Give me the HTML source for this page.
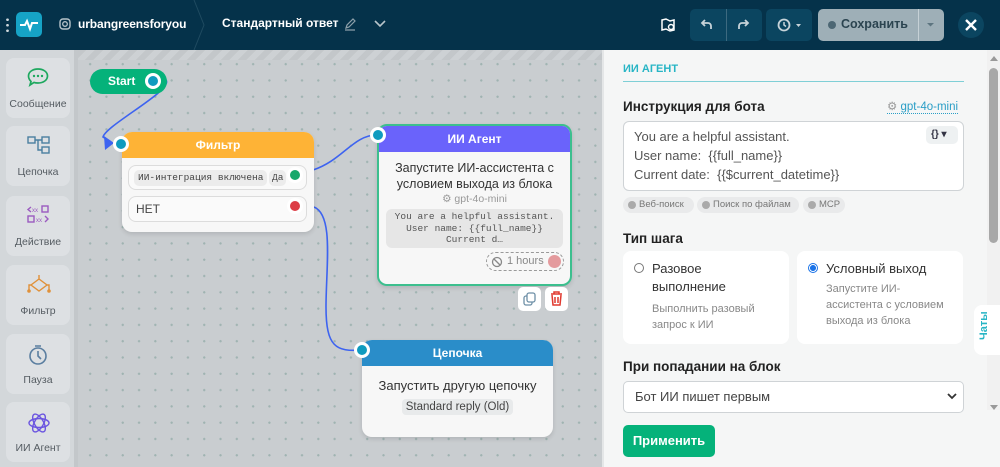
<!DOCTYPE html>
<html><head><meta charset="utf-8"><style>
*{box-sizing:border-box;margin:0;padding:0}
body{width:1000px;height:467px;overflow:hidden;font-family:"Liberation Sans","Noto Sans CJK SC",sans-serif;background:#c9cdd0;position:relative}
.abs{position:absolute}
.hdr{left:0;top:0;width:1000px;height:50px;background:#05324a;color:#fff}
.canvas{left:78px;top:50px;width:524px;height:417px;background-color:#c9cdd0;background-image:radial-gradient(circle,#9fb3b1 1px,transparent 1.3px);background-size:16.3px 16.3px;background-position:4px 6px}
.side{left:0;top:50px;width:78px;height:417px;background:#d3d7da;border-right:4px solid #c3c7ca}
.item{left:6px;width:64px;height:60px;background:#dde0e3;border-radius:8px;font-size:10.5px;color:#555c62;text-align:center}
.item span{position:absolute;left:0;right:0;bottom:8px}
.item svg{position:absolute;left:20px;top:8px}
.node{background:#f7f7f7;border-radius:10px;box-shadow:0 2px 5px rgba(0,0,0,.12);overflow:hidden}
.nh{height:26px;color:#fff;font-weight:bold;font-size:12px;text-align:center;line-height:26px}
.port{width:16px;height:16px;border-radius:50%;background:#0f9bbf;border:3px solid #fff}
.panel{left:602px;top:50px;width:398px;height:417px;background:#f5f6f6}
.lbl{font-size:13.5px;color:#222;font-weight:bold}
.chip{height:16px;border-radius:8px;background:#e9eaeb;font-size:9.5px;color:#777;padding:0 6px 0 16px;line-height:16px}
.chip:before{content:"";position:absolute;left:5px;top:4px;width:8px;height:8px;border-radius:50%;background:#aaa}
.card{background:#fff;border-radius:8px;width:166px;height:93px}
</style></head><body>
<div class="abs hdr">
  <div class="abs" style="left:6px;top:17px;width:3px;height:16px;background:radial-gradient(circle,#cfd8dc 1.2px,transparent 1.5px);background-size:3px 5.5px"></div>
  <div class="abs" style="left:16px;top:12px;width:26px;height:25px;background:#16a3c6;border-radius:5px">
    <svg width="26" height="25"><path d="M4 13h5l2-4 3 8 2-6h6" stroke="#fff" stroke-width="2" fill="none"/></svg></div>
  <svg class="abs" style="left:59px;top:18px" width="12" height="12"><rect x="1" y="1" width="10" height="10" rx="3" stroke="#b8c4ca" stroke-width="1.4" fill="none"/><circle cx="6" cy="6" r="2.3" stroke="#b8c4ca" stroke-width="1.3" fill="none"/></svg>
  <div class="abs" style="left:78px;top:17px;font-size:12px;font-weight:bold;letter-spacing:-0.1px">urbangreensforyou</div>
  <svg class="abs" style="left:192px;top:0" width="14" height="50"><path d="M2 0L12 25L2 50" stroke="#1f4a60" fill="none"/></svg>
  <div class="abs" style="left:222px;top:16px;font-size:12px;font-weight:bold">Стандартный ответ</div>
  <svg class="abs" style="left:343px;top:17px" width="14" height="14"><path d="M3 11l1-3 6-6 2 2-6 6z M2 13h10" stroke="#8da0aa" stroke-width="1.2" fill="none"/></svg>
  <svg class="abs" style="left:373px;top:18px" width="14" height="12"><path d="M2 3l5 5 5-5" stroke="#b8c4ca" stroke-width="1.6" fill="none"/></svg>
  <svg class="abs" style="left:660px;top:17px" width="16" height="16"><path d="M2 3l4-1 4 2 4-1v10l-4 1-4-2-4 1z" stroke="#fff" stroke-width="1.5" fill="none"/><circle cx="11" cy="10" r="2.5" stroke="#fff" fill="#05324a" stroke-width="1.4"/></svg>
  <div class="abs" style="left:690px;top:9px;width:72px;height:32px;background:#0b4560;border-radius:5px"></div>
  <div class="abs" style="left:726px;top:9px;width:1px;height:32px;background:#3d6a80"></div>
  <svg class="abs" style="left:699px;top:17px" width="16" height="16"><path d="M12 12V9a3 3 0 0 0-3-3H3M6 3L3 6l3 3" stroke="#c7d3d9" stroke-width="1.8" fill="none"/></svg>
  <svg class="abs" style="left:735px;top:17px" width="16" height="16"><path d="M4 12V9a3 3 0 0 1 3-3h6M10 3l3 3-3 3" stroke="#c7d3d9" stroke-width="1.8" fill="none"/></svg>
  <div class="abs" style="left:766px;top:9px;width:46px;height:32px;background:#0b4560;border-radius:5px"></div>
  <svg class="abs" style="left:776px;top:17px" width="28" height="16"><circle cx="8" cy="8" r="5.5" stroke="#c7d3d9" stroke-width="1.8" fill="none"/><path d="M8 5v3l2 1.5" stroke="#c7d3d9" stroke-width="1.5" fill="none"/><path d="M20 7h5l-2.5 3z" fill="#c7d3d9"/></svg>
  <div class="abs" style="left:818px;top:9px;width:126px;height:32px;background:#9eafb7;border-radius:5px"></div>
  <div class="abs" style="left:918px;top:9px;width:1px;height:32px;background:#c6d1d6"></div>
  <div class="abs" style="left:828px;top:21px;width:8px;height:8px;border-radius:50%;background:#4d6774"></div>
  <div class="abs" style="left:841px;top:17px;font-size:12.5px;font-weight:bold;color:#2b4450">Сохранить</div>
  <svg class="abs" style="left:926px;top:22px" width="10" height="6"><path d="M1 1h7l-3.5 3.5z" fill="#5d7580"/></svg>
  <div class="abs" style="left:958px;top:12px;width:26px;height:26px;border-radius:50%;background:#0b4560"></div>
  <svg class="abs" style="left:964px;top:18px" width="14" height="14"><path d="M2 2l10 10M12 2L2 12" stroke="#fff" stroke-width="2.4"/></svg>
</div>

<div class="abs canvas"></div>
<div class="abs" style="left:78px;top:50px;width:524px;height:10px;background:repeating-linear-gradient(135deg,#c3c7ca 0 6px,#cdd1d4 6px 12px)"></div>
<div class="abs side"></div>
<div class="abs item" style="top:58px"><svg width="24" height="22"><path d="M12 3c5.5 0 9.5 3 9.5 7s-4 7-9.5 7c-1.5 0-3-.2-4-.6L4 19l1-3.5C3.5 14 2.5 12 2.5 10c0-4 4-7 9.5-7z" stroke="#1ea85f" stroke-width="1.7" fill="none"/><circle cx="8" cy="10" r="1.2" fill="#1ea85f"/><circle cx="12" cy="10" r="1.2" fill="#1ea85f"/><circle cx="16" cy="10" r="1.2" fill="#1ea85f"/></svg><span>Сообщение</span></div>
<div class="abs item" style="top:126px"><svg width="26" height="22"><rect x="2" y="3" width="7" height="6" stroke="#4a7fa0" stroke-width="1.4" fill="none"/><rect x="16" y="3" width="7" height="6" stroke="#4a7fa0" stroke-width="1.4" fill="none"/><rect x="16" y="13" width="7" height="6" stroke="#4a7fa0" stroke-width="1.4" fill="none"/><path d="M9 6h7M12 6v10h4" stroke="#4a7fa0" stroke-width="1.4" fill="none"/></svg><span>Цепочка</span></div>
<div class="abs item" style="top:196px"><svg width="26" height="22"><path d="M5 3L2 5.5 5 8" stroke="#9b5bc0" stroke-width="1.4" fill="none"/><text x="6" y="8" font-size="6" fill="#9b5bc0">xx</text><rect x="16" y="2" width="6" height="6" stroke="#9b5bc0" stroke-width="1.4" fill="none"/><rect x="2" y="12" width="6" height="6" stroke="#9b5bc0" stroke-width="1.4" fill="none"/><text x="10" y="18" font-size="6" fill="#9b5bc0">xx</text><path d="M19 12l3 3-3 3" stroke="#9b5bc0" stroke-width="1.4" fill="none"/></svg><span>Действие</span></div>
<div class="abs item" style="top:265px"><svg width="26" height="24"><path d="M13 2v4M13 6l-8 6 8 6 8-6z M5 12h-2v5M21 12h2v5" stroke="#e0913a" stroke-width="1.4" fill="none"/><circle cx="3" cy="18" r="1.8" fill="#e0913a"/><circle cx="23" cy="18" r="1.8" fill="#e0913a"/></svg><span>Фильтр</span></div>
<div class="abs item" style="top:334px"><svg width="26" height="26"><circle cx="12" cy="14" r="8" stroke="#5a7ea0" stroke-width="1.6" fill="none"/><path d="M9 4h6M12 9v5l3 3" stroke="#5a7ea0" stroke-width="1.6" fill="none"/></svg><span>Пауза</span></div>
<div class="abs item" style="top:402px"><svg width="26" height="26"><g stroke="#6b55e0" stroke-width="1.4" fill="none"><ellipse cx="13" cy="13" rx="10" ry="4.5"/><ellipse cx="13" cy="13" rx="10" ry="4.5" transform="rotate(60 13 13)"/><ellipse cx="13" cy="13" rx="10" ry="4.5" transform="rotate(120 13 13)"/></g></svg><span>ИИ Агент</span></div>

<svg class="abs" style="left:0;top:0" width="602" height="467">
<g stroke="#3d63f0" stroke-width="1.6" fill="none">
<path d="M166 80c8 10-60 45-63 57l8 5"/>
<path d="M313 170c30-10 40-35 64-35"/>
<path d="M314 207c20 8 12 60 12 100s10 45 36 43"/>
</g>
<path d="M104 136l10 7-9 7z" fill="#3d63f0"/>
</svg>

<div class="abs" style="left:90px;top:69px;width:77px;height:25px;border-radius:13px;background:#05b27a;color:#fff;font-weight:bold;font-size:12px;line-height:25px;padding-left:18px">Start</div>
<div class="abs port" style="left:145px;top:73px"></div>

<div class="abs node" style="left:122px;top:132px;width:192px;height:100px">
  <div class="nh" style="background:#feb336">Фильтр</div>
  <div class="abs" style="left:6px;top:33px;width:179px;height:25px;border:1px solid #dcdcdc;border-radius:8px;background:#fafafa"></div>
  <div class="abs" style="left:12px;top:38px;height:16px;padding:0 4px;background:#ececec;border-radius:5px;font-family:'Liberation Mono',monospace;font-size:9.5px;line-height:16px;color:#444">ИИ-интеграция включена</div>
  <div class="abs" style="left:147px;top:38px;height:16px;padding:0 3px;background:#ececec;border-radius:5px;font-family:'Liberation Mono',monospace;font-size:9.5px;line-height:16px;color:#444">Да</div>
  <div class="abs" style="left:6px;top:64px;width:179px;height:26px;border:1px solid #dcdcdc;border-radius:8px;background:#fafafa;font-size:12px;color:#444;line-height:24px;padding-left:7px">НЕТ</div>
</div>
<div class="abs port" style="left:113px;top:136px"></div>
<div class="abs" style="left:287px;top:167px;width:16px;height:16px;border-radius:50%;background:#17a86b;border:3px solid #fff"></div>
<div class="abs" style="left:287px;top:198px;width:16px;height:16px;border-radius:50%;background:#dc3d45;border:3px solid #fff"></div>

<div class="abs node" style="left:377px;top:124px;width:195px;height:162px;border:2px solid #3cbf8e">
  <div class="nh" style="background:#6a63fb">ИИ Агент</div>
  <div style="text-align:center;font-size:12.5px;color:#333;line-height:16px;margin-top:8px">Запустите ИИ-ассистента с<br>условием выхода из блока</div>
  <div style="text-align:center;font-size:10.5px;color:#999;margin-top:1px">⚙ gpt-4o-mini</div>
  <div style="margin:4px 7px 0;background:#e6e6e6;border-radius:6px;font-family:'Liberation Mono',monospace;font-size:9.5px;color:#555;text-align:center;line-height:11.5px;padding:2px 0">You are a helpful assistant.<br>User name: {{full_name}}<br>Current d…</div>
  <div class="abs" style="left:107px;top:126px;width:78px;height:19px;border:1px dashed #999;border-radius:10px;font-size:11px;color:#888;line-height:17px;padding-left:20px">1 hours</div>
  <svg class="abs" style="left:112px;top:130px" width="12" height="12"><circle cx="6" cy="6" r="4.5" stroke="#888" stroke-width="1.3" fill="none"/><path d="M3 3l6 6" stroke="#888" stroke-width="1.3"/></svg>
  <div class="abs" style="left:169px;top:129px;width:13px;height:13px;border-radius:50%;background:#e49a9d"></div>
</div>
<div class="abs port" style="left:370px;top:127px"></div>
<div class="abs" style="left:518px;top:287px;width:23px;height:24px;background:#fff;border-radius:5px"><svg width="23" height="24"><rect x="6" y="9" width="8" height="9" rx="2" stroke="#6d8fa6" stroke-width="1.3" fill="none"/><rect x="9" y="6" width="8" height="9" rx="2" stroke="#6d8fa6" stroke-width="1.3" fill="#fff"/></svg></div>
<div class="abs" style="left:545px;top:287px;width:23px;height:24px;background:#fff;border-radius:5px"><svg width="23" height="24"><path d="M6 7h11M9 7V5h5v2M7 8l1 10h7l1-10M10 10v6M13 10v6" stroke="#e0392f" stroke-width="1.5" fill="none"/></svg></div>

<div class="abs node" style="left:362px;top:340px;width:191px;height:97px">
  <div class="nh" style="background:#2a8dc9">Цепочка</div>
  <div style="text-align:center;font-size:13px;color:#333;margin-top:12px">Запустить другую цепочку</div>
  <div style="text-align:center;margin-top:4px"><span style="background:#e8eaeb;border-radius:4px;font-size:11.5px;color:#444;padding:2px 4px">Standard reply (Old)</span></div>
</div>
<div class="abs port" style="left:354px;top:342px"></div>

<div class="abs panel"></div>
<div class="abs" style="left:602px;top:50px;width:2px;height:417px;background:#e4e6e7"></div>
<div class="abs" style="left:623px;top:63px;font-size:11px;font-weight:bold;color:#27b5c5">ИИ АГЕНТ</div>
<div class="abs" style="left:623px;top:81px;width:341px;height:1px;background:#7fcfd6"></div>
<div class="abs lbl" style="left:623px;top:99px">Инструкция для бота</div>
<div class="abs" style="left:887px;top:99px;font-size:11.5px;color:#2a9ec6;border-bottom:1px dotted #2a9ec6"><span style="color:#999">⚙</span> gpt-4o-mini</div>
<div class="abs" style="left:623px;top:121px;width:341px;height:70px;background:#fff;border:1px solid #cfd3d6;border-radius:6px;font-size:13px;color:#555;line-height:19px;padding:5px 10px">You are a helpful assistant.<br>User name: &nbsp;{{full_name}}<br>Current date: &nbsp;{{$current_datetime}}</div>
<div class="abs" style="left:926px;top:126px;width:32px;height:18px;background:#eef1f2;border-radius:5px;font-size:10px;font-weight:bold;color:#334;line-height:18px;padding-left:5px">{} ▾</div>
<div class="abs chip" style="left:623px;top:197px;width:71px">Веб-поиск</div>
<div class="abs chip" style="left:697px;top:197px;width:102px">Поиск по файлам</div>
<div class="abs chip" style="left:803px;top:197px;width:42px">MCP</div>
<div class="abs lbl" style="left:623px;top:231px">Тип шага</div>
<div class="abs card" style="left:623px;top:251px">
  <div class="abs" style="left:11px;top:12px;width:10px;height:10px;border-radius:50%;border:1px solid #777"></div>
  <div class="abs" style="left:29px;top:9px;font-size:13px;color:#333;line-height:18px">Разовое<br>выполнение</div>
  <div class="abs" style="left:29px;top:50px;font-size:11px;color:#888;line-height:16px">Выполнить разовый<br>запрос к ИИ</div>
</div>
<div class="abs card" style="left:797px;top:251px">
  <div class="abs" style="left:11px;top:12px;width:10px;height:10px;border-radius:50%;border:1px solid #1a73e8;background:radial-gradient(circle,#1a73e8 2.8px,#fff 3.2px)"></div>
  <div class="abs" style="left:29px;top:9px;font-size:13px;color:#333;line-height:18px">Условный выход</div>
  <div class="abs" style="left:29px;top:30px;font-size:11px;color:#888;line-height:16px">Запустите ИИ-<br>ассистента с условием<br>выхода из блока</div>
</div>
<div class="abs lbl" style="left:623px;top:359px">При попадании на блок</div>
<div class="abs" style="left:623px;top:381px;width:341px;height:32px;background:#fff;border:1px solid #cfd3d6;border-radius:5px;font-size:13px;color:#444;line-height:30px;padding-left:11px">Бот ИИ пишет первым</div>
<svg class="abs" style="left:947px;top:393px" width="10" height="8"><path d="M1 1l4 4 4-4" stroke="#333" stroke-width="1.8" fill="none"/></svg>
<div class="abs" style="left:623px;top:425px;width:92px;height:32px;background:#05b27a;border-radius:5px;color:#fff;font-weight:bold;font-size:13px;line-height:32px;text-align:center">Применить</div>
<div class="abs" style="left:987px;top:50px;width:13px;height:360px;background:#f1f1f1"></div>
<div class="abs" style="left:989px;top:68px;width:9px;height:175px;background:#a8a8a8;border-radius:5px"></div>
<svg class="abs" style="left:989px;top:55px" width="10" height="8"><path d="M1 6h8L5 1z" fill="#999"/></svg>
<svg class="abs" style="left:989px;top:403px" width="10" height="8"><path d="M1 2h8L5 7z" fill="#999"/></svg>
<div class="abs" style="left:974px;top:305px;width:26px;height:50px;background:#fff;border-radius:8px 0 0 8px"></div>
<div class="abs" style="left:978px;top:340px;transform:rotate(-90deg);transform-origin:0 0;font-size:11px;color:#27b5c5;font-weight:bold">Чаты</div>
</body></html>
